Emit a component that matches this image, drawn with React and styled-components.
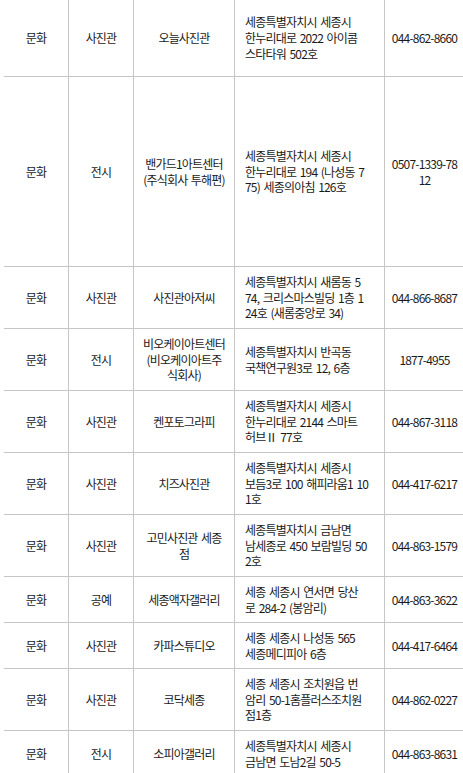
import React from 'react';
import styled, { createGlobalStyle } from 'styled-components';

const GlobalStyle = createGlobalStyle`
  html, body {
    margin: 0;
    padding: 0;
    background: #fff;
    overflow: hidden;
  }
  body {
    font-family: 'Noto Sans CJK KR', 'Noto Sans', sans-serif;
  }
`;

const Page = styled.div`
  padding-left: 4px;
`;

const Table = styled.div`
  width: 460px;
  color: #1a1a1a;
  font-size: 12px;
  line-height: 15.8px;
  letter-spacing: -0.8px;
  word-spacing: 1.6px;
`;

const Row = styled.div`
  display: grid;
  grid-template-columns: 64px 65px 101px 150px 80px;
  height: ${p => p.$h}px;
  box-sizing: border-box;
  border-bottom: 1px solid #c6c6c6;
  border-right: 1px solid #c6c6c6;
`;

const Cell = styled.div`
  display: flex;
  flex-direction: column;
  justify-content: center;
  align-items: ${p => (p.$left ? 'flex-start' : 'center')};
  text-align: ${p => (p.$left ? 'left' : 'center')};
  padding: ${p => (p.$left ? '0 4px 0 10px' : '0 2px')};
  border-left: ${p => (p.$first ? 'none' : '1px solid #c6c6c6')};
  white-space: nowrap;
  overflow: hidden;
`;

const Line = styled.span`
  display: block;
`;

const rows = [
  { h: 77, cat: '문화', type: '사진관', name: ['오늘사진관'], addr: ['세종특별자치시 세종시', '한누리대로 2022 아이콤', '스타타워 502호'], tel: ['044-862-8660'] },
  { h: 190, cat: '문화', type: '전시', name: ['밴가드1아트센터', '(주식회사 투해편)'], addr: ['세종특별자치시 세종시', '한누리대로 194 (나성동 7', '75) 세종의아침 126호'], tel: ['0507-1339-78', '12'] },
  { h: 62, cat: '문화', type: '사진관', name: ['사진관아저씨'], addr: ['세종특별자치시 새롬동 5', '74, 크리스마스빌딩 1층 1', '24호 (새롬중앙로 34)'], tel: ['044-866-8687'] },
  { h: 62, cat: '문화', type: '전시', name: ['비오케이아트센터', '(비오케이아트주', '식회사)'], addr: ['세종특별자치시 반곡동', '국책연구원3로 12, 6층'], tel: ['1877-4955'] },
  { h: 62, cat: '문화', type: '사진관', name: ['켄포토그라피'], addr: ['세종특별자치시 세종시', '한누리대로 2144 스마트', '허브Ⅱ 77호'], tel: ['044-867-3118'] },
  { h: 62, cat: '문화', type: '사진관', name: ['치즈사진관'], addr: ['세종특별자치시 세종시', '보듬3로 100 해피라움1 10', '1호'], tel: ['044-417-6217'] },
  { h: 62, cat: '문화', type: '사진관', name: ['고민사진관 세종', '점'], addr: ['세종특별자치시 금남면', '남세종로 450 보람빌딩 50', '2호'], tel: ['044-863-1579'] },
  { h: 46, cat: '문화', type: '공예', name: ['세종액자갤러리'], addr: ['세종 세종시 연서면 당산', '로 284-2 (봉암리)'], tel: ['044-863-3622'] },
  { h: 46, cat: '문화', type: '사진관', name: ['카파스튜디오'], addr: ['세종 세종시 나성동 565', '세종메디피아 6층'], tel: ['044-417-6464'] },
  { h: 62, cat: '문화', type: '사진관', name: ['코닥세종'], addr: ['세종 세종시 조치원읍 번', '암리 50-1홈플러스조치원', '점1층'], tel: ['044-862-0227'] },
  { h: 46, cat: '문화', type: '전시', name: ['소피아갤러리'], addr: ['세종특별자치시 세종시', '금남면 도남2길 50-5'], tel: ['044-863-8631'] },
];

const Lines = ({ items }) => items.map((t, i) => <Line key={i}>{t}</Line>);

export default function App() {
  return (
    <>
      <GlobalStyle />
      <Page>
        <Table>
          {rows.map((r, i) => (
            <Row key={i} $h={r.h}>
              <Cell $first>{r.cat}</Cell>
              <Cell>{r.type}</Cell>
              <Cell><Lines items={r.name} /></Cell>
              <Cell $left><Lines items={r.addr} /></Cell>
              <Cell><Lines items={r.tel} /></Cell>
            </Row>
          ))}
        </Table>
      </Page>
    </>
  );
}
